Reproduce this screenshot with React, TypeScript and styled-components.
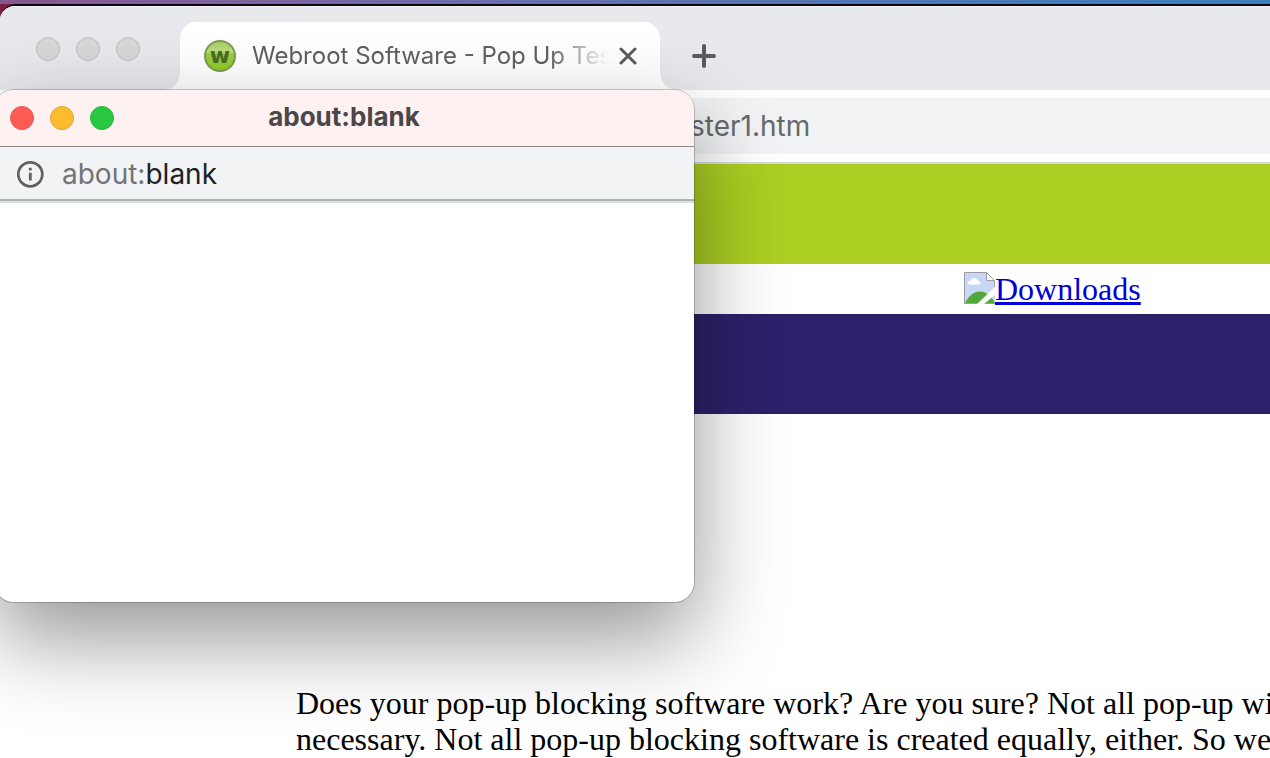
import React from "react";
import styled, { createGlobalStyle } from "styled-components";

const ui = `Inter, "Liberation Sans", sans-serif`;

const GlobalStyle = createGlobalStyle`
  *, *::before, *::after { box-sizing: border-box; }
  body { margin: 0; background: #ffffff; }
  button { border: 0; padding: 0; background: none; font: inherit; color: inherit; }
`;

const Desktop = styled.div`
  position: relative;
  min-height: 100vh;
  padding-top: 4px;
  overflow: hidden;
  background:
    linear-gradient(#7d1d45, #7d1d45) 0 4px / 16px 16px no-repeat,
    linear-gradient(90deg, #86578f 0, #7c63a0 20%, #6a6eae 40%, #5277b2 65%, #3b80bf 100%);
`;

const BrowserWindow = styled.main`
  min-height: calc(100vh - 4px);
  border-top: 2px solid #0c0710;
  border-top-left-radius: 16px;
  background: #ffffff;
  overflow: hidden;
`;

const TabStrip = styled.header`
  display: flex;
  align-items: flex-end;
  height: 84px;
  padding-left: 36px;
  background: #e8e9ec;
  border-top: 1px solid #f4f4f6;
`;

const Lights = styled.div`
  display: flex;
  gap: 16px;
`;

const StripLights = styled(Lights)`
  align-self: flex-start;
  margin: 30px 40px 0 0;
`;

const Light = styled.button<{ $fill: string; $rim: string }>`
  width: 24px;
  height: 24px;
  border: 1px solid ${(p) => p.$rim};
  border-radius: 50%;
  background: ${(p) => p.$fill};
`;

const Tab = styled.div`
  position: relative;
  display: flex;
  align-items: center;
  width: 480px;
  height: 68px;
  padding: 0 20px 0 24px;
  border-radius: 16px 16px 0 0;
  background: #ffffff;

  &::before,
  &::after {
    content: "";
    position: absolute;
    bottom: 0;
    width: 16px;
    height: 16px;
  }
  &::before {
    right: 100%;
    background: radial-gradient(circle at 0 0, transparent 15px, #ffffff 16px);
  }
  &::after {
    left: 100%;
    background: radial-gradient(circle at 100% 0, transparent 15px, #ffffff 16px);
  }
`;

const TabTitle = styled.span`
  flex: 1;
  min-width: 0;
  margin: 0 4px 0 16px;
  overflow: hidden;
  white-space: nowrap;
  font: 400 24px/32px ${ui};
  color: #5f6062;
  mask-image: linear-gradient(90deg, #000 calc(100% - 64px), transparent calc(100% - 4px));
`;

const IconButton = styled.button`
  display: grid;
  flex: none;
  place-items: center;
  width: 24px;
  height: 24px;
  color: #5b5c5e;
`;

const InfoButton = styled(IconButton)`
  width: 28px;
  height: 28px;
`;

const NewTab = styled(IconButton)`
  margin: 0 0 22px 32px;
`;

const Toolbar = styled.div`
  padding: 8px 0;
  border-bottom: 2px solid #d7dce1;
  background: #ffffff;
`;

const Address = styled.input`
  display: block;
  width: 100%;
  height: 56px;
  padding: 0 0 0 690px;
  border: 0;
  outline: 0;
  background: #f1f3f4;
  font: 400 28px/36px ${ui};
  color: #66686b;
`;

const Band = styled.div<{ $color: string }>`
  height: 100px;
  background: ${(p) => p.$color};
`;

const Nav = styled.nav`
  display: flex;
  height: 50px;
  padding: 8px 0 0 964px;
`;

const DownloadLink = styled.a`
  display: flex;
  align-items: flex-start;
  font: 32px/34px "Liberation Serif", "Times New Roman", serif;
  color: #0000d8;
  text-decoration: underline;
`;

const Article = styled.p`
  margin: 271px 0 0;
  padding-left: 296px;
  white-space: nowrap;
  font: 32px/36px "Liberation Serif", "Times New Roman", serif;
  color: #000000;
`;

const Popup = styled.section`
  position: absolute;
  top: 90px;
  left: -6px;
  width: 700px;
  height: 512px;
  border-radius: 20px;
  overflow: hidden;
  background: #ffffff;
  box-shadow: 0 0 0 1px rgba(0, 0, 0, 0.2), 0 36px 88px rgba(0, 0, 0, 0.42);
`;

const TitleBar = styled.div`
  display: grid;
  grid-template-columns: 1fr auto 1fr;
  align-items: center;
  height: 57px;
  padding: 0 16px;
  border-bottom: 1px solid #8d8586;
  background: #fef1f1;
`;

const PopupTitle = styled.h1`
  margin: 0;
  padding-bottom: 2px;
  font: 700 26px/32px ${ui};
  color: #4b4647;
`;

const PopupAddress = styled.div`
  display: flex;
  align-items: center;
  gap: 18px;
  height: 56px;
  padding-left: 22px;
  border-bottom: 2px solid #dcdfe0;
  background: #f1f3f4;
  box-shadow: inset 0 -2px 0 #afb2b4;
`;

const PopupUrl = styled.span`
  font: 400 28px/36px ${ui};
  color: #202124;
`;

const Scheme = styled.span`
  color: #727477;
`;

const Favicon = () => (
  <svg width="32" height="32" viewBox="0 0 32 32" aria-hidden="true">
    <defs>
      <linearGradient id="orb" x1="0" y1="0" x2="0" y2="1">
        <stop offset="0" stopColor="#a6cc63" />
        <stop offset="0.36" stopColor="#b9dd80" />
        <stop offset="0.44" stopColor="#97cb48" />
        <stop offset="1" stopColor="#90cb20" />
      </linearGradient>
    </defs>
    <circle cx="16" cy="16" r="15" fill="url(#orb)" stroke="#7b9c52" strokeWidth="2" />
    <text x="16" y="23" textAnchor="middle" fontFamily="DejaVu Sans" fontWeight="700" fontSize="22" fill="#4a6a26">
      w
    </text>
  </svg>
);

const CloseIcon = () => (
  <svg width="18" height="18" viewBox="0 0 18 18" aria-hidden="true">
    <path d="M2 2 16 16M16 2 2 16" stroke="currentColor" strokeWidth="3" strokeLinecap="round" />
  </svg>
);

const PlusIcon = () => (
  <svg width="24" height="24" viewBox="0 0 24 24" aria-hidden="true">
    <path d="M12 2V22M2 12H22" stroke="currentColor" strokeWidth="4" strokeLinecap="round" />
  </svg>
);

const InfoIcon = () => (
  <svg width="28" height="28" viewBox="0 0 28 28" aria-hidden="true">
    <circle cx="14.3" cy="14.3" r="12" fill="none" stroke="#5f6165" strokeWidth="2.7" />
    <path d="M14.3 12.8V20.6M14.3 7.8V10.6" stroke="#5f6165" strokeWidth="2.8" />
  </svg>
);

const BrokenImage = () => (
  <svg width="31" height="32" viewBox="0 0 31 32" role="img" aria-label="Missing image">
    <path d="M.5.5H22.5L31 9V32H.5Z" fill="#c8d7f3" />
    <path d="M6 12.5C3 12.5 3 8.5 6.5 8.5C7.5 5 13 5 13.5 8.5C17 8.5 17 12.5 14.5 12.5Z" fill="#fff" />
    <path d="M1 31.5C4 24 10 19.5 16 19.5C22 19.5 28 24 31 31.5Z" fill="#54a73c" />
    <path d="M31 15V23L20 32H13Z" fill="#fff" />
    <path d="M22.5.5V8.5H30.5Z" fill="#fff" stroke="#9a9da3" />
    <path d="M22.5.5H.5V31.5H13M21 31.5H31M30.5 9V15" fill="none" stroke="#9a9da3" />
  </svg>
);

export default function App() {
  return (
    <Desktop>
      <GlobalStyle />
      <BrowserWindow>
        <TabStrip>
          <StripLights>
            {["Close window", "Minimise window", "Zoom window"].map((label) => (
              <Light key={label} aria-label={label} $fill="#d6d8d8" $rim="#bcbebf" />
            ))}
          </StripLights>
          <Tab>
            <Favicon />
            <TabTitle>Webroot Software - Pop Up Tes</TabTitle>
            <IconButton aria-label="Close tab">
              <CloseIcon />
            </IconButton>
          </Tab>
          <NewTab aria-label="New tab">
            <PlusIcon />
          </NewTab>
        </TabStrip>
        <Toolbar>
          <Address aria-label="Address" defaultValue="ster1.htm" />
        </Toolbar>
        <Band $color="#abcf23" />
        <Nav>
          <DownloadLink href="#downloads">
            <BrokenImage />
            Downloads
          </DownloadLink>
        </Nav>
        <Band $color="#2c216b" />
        <Article>
          Does your pop-up blocking software work? Are you sure? Not all pop-up wi
          <br />
          necessary. Not all pop-up blocking software is created equally, either. So we
        </Article>
      </BrowserWindow>
      <Popup aria-label="about:blank">
        <TitleBar>
          <Lights>
            <Light aria-label="Close" $fill="#ff5b55" $rim="#e9544f" />
            <Light aria-label="Minimise" $fill="#fdbc2e" $rim="#dda538" />
            <Light aria-label="Zoom" $fill="#28c840" $rim="#26b83c" />
          </Lights>
          <PopupTitle>about:blank</PopupTitle>
        </TitleBar>
        <PopupAddress>
          <InfoButton aria-label="Site information">
            <InfoIcon />
          </InfoButton>
          <PopupUrl>
            <Scheme>about:</Scheme>blank
          </PopupUrl>
        </PopupAddress>
      </Popup>
    </Desktop>
  );
}
